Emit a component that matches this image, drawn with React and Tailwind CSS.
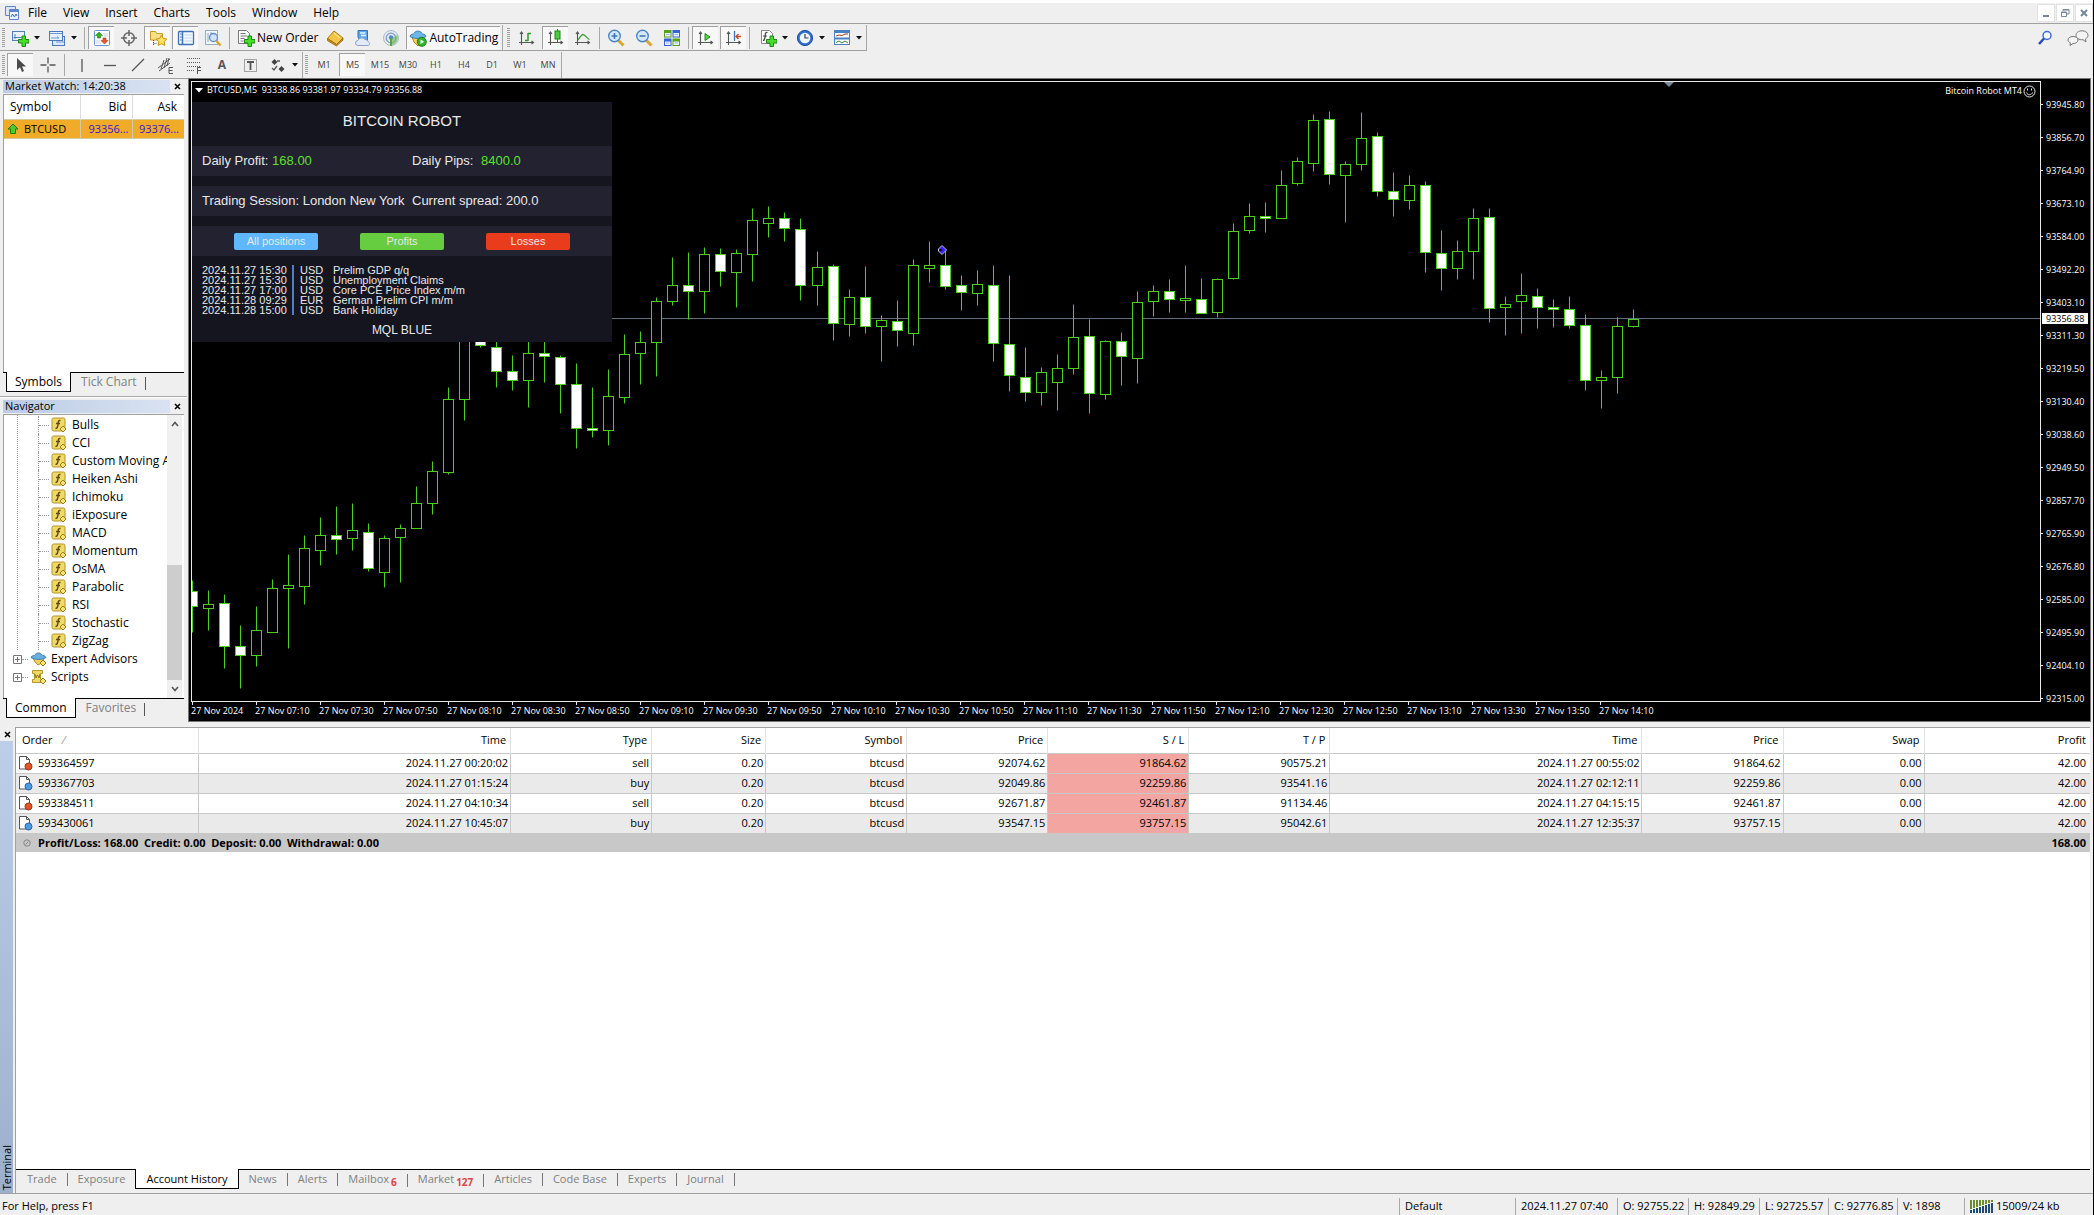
const GREEN = "#4ccf1c";

// [high, bodyTop, bodyBottom, low, bearish]
const CANDLES = [
  [580, 591, 606, 632, 1], [590, 604, 608, 630, 0], [594, 603, 646, 668, 1], [625, 646, 655, 688, 1],
  [606, 630, 655, 666, 0], [579, 588, 632, 632, 0], [554, 585, 588, 648, 0], [535, 548, 586, 604, 0],
  [517, 535, 550, 565, 0], [506, 535, 539, 554, 1], [503, 530, 538, 550, 0], [523, 532, 568, 571, 1],
  [535, 538, 572, 587, 0], [524, 528, 537, 582, 0], [486, 503, 528, 528, 0], [461, 471, 503, 514, 0],
  [387, 399, 472, 474, 0], [290, 300, 399, 420, 0], [320, 330, 345, 347, 1], [335, 347, 371, 387, 1],
  [355, 371, 380, 390, 1], [335, 353, 380, 407, 0], [335, 353, 356, 382, 1], [355, 357, 384, 413, 1],
  [363, 384, 428, 448, 1], [387, 428, 430, 437, 1], [369, 396, 430, 445, 0], [334, 354, 397, 403, 0],
  [331, 342, 353, 384, 0], [297, 301, 342, 376, 0], [257, 285, 301, 305, 0], [252, 285, 291, 319, 1],
  [247, 254, 291, 313, 0], [248, 254, 271, 286, 1], [249, 253, 272, 307, 0], [208, 220, 254, 281, 0],
  [206, 218, 223, 237, 0], [212, 218, 228, 241, 1], [218, 229, 285, 300, 1], [251, 267, 285, 305, 0],
  [264, 266, 323, 340, 1], [289, 297, 324, 336, 0], [266, 297, 326, 333, 1], [315, 320, 326, 361, 0],
  [300, 321, 330, 346, 1], [259, 265, 333, 345, 0], [241, 265, 268, 282, 0], [250, 265, 286, 289, 1],
  [275, 285, 292, 310, 1], [270, 284, 293, 305, 0], [265, 285, 343, 361, 1], [275, 344, 375, 391, 1],
  [347, 377, 392, 401, 1], [367, 372, 392, 405, 0], [354, 368, 382, 410, 0], [304, 337, 368, 374, 0],
  [319, 336, 393, 413, 1], [340, 341, 394, 399, 0], [332, 341, 356, 385, 1], [291, 302, 358, 383, 0],
  [285, 291, 301, 316, 0], [279, 291, 299, 312, 1], [265, 298, 300, 312, 0], [278, 299, 313, 313, 1],
  [278, 279, 312, 317, 0], [223, 231, 278, 279, 0], [203, 216, 230, 233, 0], [202, 216, 218, 232, 1],
  [170, 185, 218, 218, 0], [157, 161, 183, 185, 0], [114, 120, 163, 171, 0], [111, 119, 174, 184, 1],
  [161, 164, 175, 222, 0], [112, 138, 164, 170, 0], [132, 136, 191, 196, 1], [172, 191, 199, 216, 1],
  [175, 185, 200, 209, 0], [181, 185, 252, 272, 1], [230, 253, 268, 290, 1], [240, 251, 268, 279, 0],
  [208, 218, 251, 279, 0], [208, 217, 308, 322, 1], [296, 304, 307, 335, 0], [273, 295, 301, 333, 0],
  [288, 296, 307, 328, 1], [299, 307, 309, 327, 1], [296, 309, 325, 328, 1], [314, 325, 380, 390, 1],
  [370, 377, 380, 408, 0], [317, 326, 377, 393, 0], [309, 319, 326, 327, 0],
];

const PRICES = [
  "93945.80", "93856.70", "93764.90", "93673.10", "93584.00", "93492.20", "93403.10",
  "93311.30", "93219.50", "93130.40", "93038.60", "92949.50", "92857.70", "92765.90",
  "92676.80", "92585.00", "92495.90", "92404.10", "92315.00",
];

const TIMES = [
  "2024", "07:10", "07:30", "07:50", "08:10", "08:30", "08:50", "09:10", "09:30", "09:50",
  "10:10", "10:30", "10:50", "11:10", "11:30", "11:50", "12:10", "12:30", "12:50", "13:10",
  "13:30", "13:50", "14:10",
];

const INDICATORS = [
  "Bulls", "CCI", "Custom Moving Average", "Heiken Ashi", "Ichimoku", "iExposure", "MACD",
  "Momentum", "OsMA", "Parabolic", "RSI", "Stochastic", "ZigZag",
];

const NEWS = [
  ["2024.11.27 15:30", "USD", "Prelim GDP q/q"],
  ["2024.11.27 15:30", "USD", "Unemployment Claims"],
  ["2024.11.27 17:00", "USD", "Core PCE Price Index m/m"],
  ["2024.11.28 09:29", "EUR", "German Prelim CPI m/m"],
  ["2024.11.28 15:00", "USD", "Bank Holiday"],
];

const COLUMNS = ["Time", "Type", "Size", "Symbol", "Price", "S / L", "T / P", "Time", "Price", "Swap", "Profit"];

const ORDERS = [
  ["593364597", "2024.11.27 00:20:02", "sell", "0.20", "btcusd", "92074.62", "91864.62", "90575.21", "2024.11.27 00:55:02", "91864.62", "0.00", "42.00"],
  ["593367703", "2024.11.27 01:15:24", "buy", "0.20", "btcusd", "92049.86", "92259.86", "93541.16", "2024.11.27 02:12:11", "92259.86", "0.00", "42.00"],
  ["593384511", "2024.11.27 04:10:34", "sell", "0.20", "btcusd", "92671.87", "92461.87", "91134.46", "2024.11.27 04:15:15", "92461.87", "0.00", "42.00"],
  ["593430061", "2024.11.27 10:45:07", "buy", "0.20", "btcusd", "93547.15", "93757.15", "95042.61", "2024.11.27 12:35:37", "93757.15", "0.00", "42.00"],
];

const TERMINAL_TABS = [
  { label: "Trade" },
  { label: "Exposure" },
  { label: "Account History", active: true },
  { label: "News" },
  { label: "Alerts" },
  { label: "Mailbox", count: 6 },
  { label: "Market", count: 127 },
  { label: "Articles" },
  { label: "Code Base" },
  { label: "Experts" },
  { label: "Journal" },
];

function Svg({ children, size = 18 }) {
  return (
    <svg width={size} height={size} viewBox="0 0 18 18" fill="none" className="shrink-0" aria-hidden="true">
      {children}
    </svg>
  );
}

function Plus() {
  return <path d="M11 7h3.500v3.500H18V14h-3.500v3.500H11V14H7.500v-3.500H11z" fill="#4ade2a" stroke="#168a12" strokeWidth="1" />;
}

function Axes() {
  return <path d="M3.500 3v13M1 13.500h14M2 5l1.500-2L5 5M13.500 12l2 1.500-2 1.500" stroke="#555" strokeWidth="1.100" />;
}

function Caret() {
  return (
    <svg width="6" height="4" viewBox="0 0 6 4" className="shrink-0" aria-hidden="true">
      <path d="M0 0h6L3 3.500z" fill="#111" />
    </svg>
  );
}

const ICONS = {
  newChart: (
    <>
      <rect x="1.500" y="2.500" width="12" height="9" fill="#e8f1fb" stroke="#4f81bd" />
      <path d="M4 5v5M2.500 8.500h8" stroke="#4f81bd" />
      <Plus />
    </>
  ),
  profiles: (
    <>
      <rect x="4.500" y="7.500" width="12" height="9" fill="#dbe8f8" stroke="#4a78bd" />
      <rect x="1.500" y="2.500" width="13" height="9" fill="#e8f1fb" stroke="#4a78bd" />
      <path d="M2 4.500h12M3 9h8l-2-1.500M16 13H8" stroke="#6f9bd2" />
    </>
  ),
  marketWatch: (
    <>
      <rect x="1.500" y="1.500" width="15" height="15" rx="1" fill="#fff" stroke="#6b94cc" />
      <path d="M10 5h5M3 12h4M3 14h5M11 7h4" stroke="#c9d3e2" />
      <path d="M6 3l3.500 3.500h-2V9h-3V6.500h-2z" fill="#37b51e" stroke="#1a7d12" strokeWidth=".6" />
      <path d="M11.500 15L8 11.500h2V9h3v2.500h2z" fill="#f0562a" stroke="#b33210" strokeWidth=".6" />
    </>
  ),
  dataWindow: (
    <>
      <circle cx="9" cy="9" r="5.300" stroke="#666" strokeWidth="1.500" />
      <path d="M9 1v6M9 11v6M1 9h6M11 9h6" stroke="#666" strokeWidth="1.500" />
    </>
  ),
  navigator: (
    <>
      <path d="M1.500 11V2.500h5l1 2h6V11z" fill="#f8e08a" stroke="#c69b21" />
      <path d="M4.500 11v6M4.500 14.500h4" stroke="#555" strokeDasharray="1 1" />
      <path d="M12.500 6l1.700 3.400 3.600.6-2.600 2.600.6 3.800-3.300-1.700-3.300 1.700.6-3.800L7.200 10l3.600-.6z" fill="#ffe066" stroke="#c8941a" />
    </>
  ),
  terminal: (
    <>
      <rect x="1.500" y="2.500" width="15" height="13" rx="1" fill="#f4f8fd" stroke="#3f6fb5" strokeWidth="1.300" />
      <path d="M5.500 3v12" stroke="#3f6fb5" strokeWidth="1.500" />
      <path d="M7.500 6h8M7.500 9h8M7.500 12h8" stroke="#c3d5ec" />
      <path d="M3 5h1.500M3 8h1.500M3 11h1.500" stroke="#3f6fb5" />
    </>
  ),
  tester: (
    <>
      <rect x="1.500" y="1.500" width="12" height="14" fill="#f3f6fa" stroke="#9aa9bb" />
      <path d="M4 4v9M7 3v9M10 4v7" stroke="#8aa4c4" />
      <circle cx="9.500" cy="8.500" r="4" fill="#cfe4f8" fillOpacity=".8" stroke="#5b8fc7" strokeWidth="1.300" />
      <path d="M12.500 12l4 4.500" stroke="#d6a52a" strokeWidth="2.500" />
    </>
  ),
  newOrder: (
    <>
      <path d="M1.500 1.500h8l3 3v10h-11z" fill="#fff" stroke="#777" />
      <path d="M3.500 4.500h5M3.500 7h7M3.500 9.500h4M3.500 12h3" stroke="#777" />
      <Plus />
    </>
  ),
  metaEditor: (
    <>
      <path d="M1.500 9.500L8 2l9 7-6.500 6.500z" fill="#f4c544" stroke="#a97b12" />
      <path d="M1.500 9.500v2.200l9 5.300 6.500-6V9l-6.500 6.500z" fill="#c89222" stroke="#94690c" strokeWidth=".8" />
      <path d="M8 4l6 5" stroke="#fff3b8" />
    </>
  ),
  mql: (
    <>
      <path d="M4 1.500h9.500V11H5.500L4 8z" fill="#5da4ea" stroke="#2f73c4" />
      <path d="M6 4h5.500M7 6.500h5" stroke="#e6f2ff" strokeWidth="1.300" />
      <path d="M4 16.500a2.500 2.500 0 010-5 4 4 0 017-1 3.500 3.500 0 013.500 2.500 2 2 0 010 3.500z" fill="#e2eaf5" stroke="#8ba4c8" />
    </>
  ),
  signals: (
    <>
      <circle cx="9" cy="9" r="7.500" fill="#e4ecf2" stroke="#a9bccd" />
      <circle cx="9" cy="9" r="4.800" stroke="#7b9cc6" strokeWidth="1.300" />
      <path d="M9 9l6.500-3a7 7 0 01-.5 6 7 7 0 01-6 4z" fill="#79bd5c" fillOpacity=".7" />
      <circle cx="9" cy="8.500" r="2.200" fill="#4e8ac9" />
      <path d="M9 9v8" stroke="#58a545" strokeWidth="2" />
    </>
  ),
  autoTrading: (
    <>
      <path d="M3 8h12l-2 5-4 4-4-4z" fill="#f6cf4e" stroke="#bb8b19" />
      <path d="M1 7.500C1 5 5 5.500 5.500 4 6 1.500 12 1.500 12.500 4c.5 1.500 4.500 1 4.500 3.500-3 2.500-13 2.500-16 0z" fill="#6cb6e8" stroke="#3a7fb5" />
      <circle cx="12.800" cy="12.800" r="4.500" fill="#35b32c" stroke="#16801a" />
      <path d="M11.500 10.500v4.600l3.700-2.300z" fill="#fff" />
    </>
  ),
  bars: (
    <>
      <Axes />
      <path d="M10 4v8M10 4.500h3M7 11.500h3" stroke="#2f9a2a" strokeWidth="1.500" />
    </>
  ),
  candles: (
    <>
      <Axes />
      <path d="M10.500 0v13" stroke="#1d8618" />
      <rect x="8" y="2" width="5" height="8" fill="#4fca42" stroke="#1d8618" />
    </>
  ),
  line: (
    <>
      <Axes />
      <path d="M3.500 11C6 9 7 5.500 9 5.500s4 4 6.500 5" stroke="#3b9a36" strokeWidth="1.300" />
    </>
  ),
  zoomIn: (
    <>
      <path d="M11 11l5.500 5.500" stroke="#d5a92c" strokeWidth="3" />
      <circle cx="7.500" cy="7" r="5.800" fill="#d4e9fb" stroke="#4a86c5" strokeWidth="1.400" />
      <path d="M7.500 4v6M4.500 7h6" stroke="#3d79ba" strokeWidth="1.600" />
    </>
  ),
  zoomOut: (
    <>
      <path d="M11 11l5.500 5.500" stroke="#d5a92c" strokeWidth="3" />
      <circle cx="7.500" cy="7" r="5.800" fill="#d4e9fb" stroke="#4a86c5" strokeWidth="1.400" />
      <path d="M4.500 7h6" stroke="#3d79ba" strokeWidth="1.600" />
    </>
  ),
  tile: (
    <>
      <path d="M1 1h7.500v7.500H1zM9.500 9.500H17V17H9.500z" fill="#58a21a" />
      <path d="M9.500 1H17v7.500H9.500zM1 9.500h7.500V17H1z" fill="#3564d4" />
      <path d="M2 4h5.500v3.500H2zM10.500 4H16v3.500h-5.500zM2 12.500h5.500V16H2zM10.500 12.500H16V16h-5.500z" fill="#eef4ff" />
      <path d="M3 5.500h3.500M11.500 5.500H15M3 14h3.500M11.500 14H15" stroke="#9db8dd" />
    </>
  ),
  autoScroll: (
    <>
      <Axes />
      <path d="M8 4.500v7l5-3.500z" fill="#5ccf4c" stroke="#218a1c" />
    </>
  ),
  shift: (
    <>
      <Axes />
      <path d="M9.500 2v10" stroke="#3d78b8" strokeWidth="1.300" />
      <path d="M16 7.500h-5M13.500 5L11 7.500l2.500 2.500" stroke="#cc4a1c" strokeWidth="1.400" />
    </>
  ),
  indicators: (
    <>
      <path d="M2.500 1.500h8l3 3v10h-11z" fill="#fff" stroke="#888" />
      <path d="M8.500 3.500c-3-.5-2 3-2.500 5s-.5 3-2 3M4 7h4" stroke="#444" strokeWidth="1.200" />
      <Plus />
    </>
  ),
  periods: (
    <>
      <circle cx="9" cy="9" r="7.600" fill="#2f6fd0" stroke="#1c4c9c" />
      <circle cx="9" cy="9" r="5.300" fill="#eef5ff" />
      <path d="M9 5v4h3.500" stroke="#345" strokeWidth="1.200" />
    </>
  ),
  templates: (
    <>
      <rect x="1.500" y="1.500" width="15" height="14" fill="#fff" stroke="#4a80c4" />
      <path d="M1.500 3h15M1.500 9.500h15" stroke="#4a80c4" strokeWidth="2" />
      <path d="M3 7l3-1 3 .5 3-1.500 3 0" stroke="#9c3a22" />
      <path d="M3 13.500l3-1.500 3 2 3-2 3 2" stroke="#358b2e" />
    </>
  ),
  cursor: <path d="M5 2v12l3-2.800 2 4.800 2-1-2-4.500h4z" fill="#4a4a4a" />,
  cross: <path d="M9 1.500v6M9 10.500v6M1.500 9h6M10.500 9h6" stroke="#555" strokeWidth="1.300" />,
  vline: <path d="M9 3v13" stroke="#555" strokeWidth="1.300" />,
  hline: <path d="M3 9.500h12" stroke="#555" strokeWidth="1.300" />,
  trend: <path d="M3 15L15 3" stroke="#555" strokeWidth="1.300" />,
  channel: (
    <>
      <path d="M1 12L13 3M2 15l11-8M4 13l3-9M7 12l3-10M10 10l2-8" stroke="#555" />
      <path d="M16 11.500h-4v6h4M12 14.500h3.500" stroke="#555" />
    </>
  ),
  fibo: (
    <>
      <path d="M2 2.500h14M2 6.500h14M2 10.500h14M2 14.500h8" stroke="#555" strokeDasharray="1 1" />
      <path d="M16 11.500h-3.500V18M12.500 14.500H16" stroke="#555" />
    </>
  ),
  label: (
    <>
      <rect x="3.500" y="3.500" width="12" height="12" stroke="#555" strokeDasharray="1 1" />
      <path d="M6 6h7M9.500 6v8" stroke="#555" strokeWidth="1.800" />
    </>
  ),
  arrows: (
    <>
      <path d="M5.500 3l3 3-3 3-3-3z M12.500 10l3 3-3 3-3-3z" fill="#444" />
      <path d="M8 5h3M3 12l2 2 3-4" stroke="#555" strokeWidth="1.300" />
    </>
  ),
};

function Separator() {
  return <span className="mx-[3px] h-[22px] w-px shrink-0 bg-[#a8a8a8]" />;
}

function Grip() {
  return (
    <span className="mx-[2px] h-[20px] w-[3px] shrink-0 bg-[repeating-linear-gradient(to_bottom,#a0a0a0_0px,#a0a0a0_1px,transparent_1px,transparent_2px)]" />
  );
}

function Tool({ icon, title, pressed, caret, children }) {
  const frame = pressed ? "border-l border-t border-[#a0a0a0] bg-[#f8f8f8]" : "";
  const size = caret ? "w-[37px] gap-[5px]" : children ? "gap-[2px] px-[2px]" : "w-[26px]";
  return (
    <button
      title={title}
      aria-label={title}
      className={`flex h-[23px] shrink-0 items-center justify-center ${size} ${frame}`}
    >
      {icon && <Svg>{ICONS[icon]}</Svg>}
      {children}
      {caret && <Caret />}
    </button>
  );
}

function WindowButton({ label, children }) {
  return (
    <button aria-label={label} className="flex h-[18px] w-[18px] items-center justify-center border border-[#e2e2e2] bg-white">
      <svg width="10" height="10" viewBox="0 0 10 10" fill="none" stroke="#76859a" aria-hidden="true">
        {children}
      </svg>
    </button>
  );
}

function MenuBar() {
  return (
    <header className="flex h-[23px] items-center border-t-3 border-white bg-[#efefef] pl-[4px] text-[12px] leading-[16px]">
      <svg width="16" height="16" viewBox="0 0 16 16" fill="none" aria-hidden="true">
        <path d="M1.500 1.500h10v9h-10z" fill="#dbe8fb" stroke="#5c86cc" />
        <path d="M5.500 4.500h9v10h-9z" fill="#eef5ff" stroke="#5c86cc" />
        <path d="M5.500 6h9" stroke="#5c86cc" strokeWidth="2" />
        <path d="M7 12l1.500-3 2 3 1.500-3 1 2" stroke="#3d6dbd" />
      </svg>
      <nav className="flex flex-1">
        {["File", "View", "Insert", "Charts", "Tools", "Window", "Help"].map((m) => (
          <button key={m} className="px-[8px]">{m}</button>
        ))}
      </nav>
      <div className="flex gap-px">
        <WindowButton label="Minimize">
          <path d="M2 8h6" strokeWidth="2" />
        </WindowButton>
        <WindowButton label="Restore">
          <path d="M3 3V1.500h6V6H7M1.500 4h5v4.500h-5zM3 2h6M1 4.500h6" />
        </WindowButton>
        <WindowButton label="Close">
          <path d="M2 2l6 6M8 2L2 8" strokeWidth="2" />
        </WindowButton>
      </div>
    </header>
  );
}

function Toolbars() {
  return (
    <div className="border-t border-[#a0a0a0] bg-[#efefef]">
      <div className="flex justify-between">
        <div className="flex h-[27px] items-center border-b border-[#a0a0a0] pt-px text-[12px]">
          <Grip />
          <Tool icon="newChart" title="New Chart" caret />
          <Tool icon="profiles" title="Profiles" caret />
          <Separator />
          <div className="flex gap-[2px]">
            <Tool icon="marketWatch" title="Market Watch" pressed />
            <Tool icon="dataWindow" title="Data Window" />
            <Tool icon="navigator" title="Navigator" pressed />
            <Tool icon="terminal" title="Terminal" pressed />
            <Tool icon="tester" title="Strategy Tester" />
          </div>
          <Separator />
          <div className="mx-[2px] flex gap-[2px]">
            <Tool icon="newOrder">New Order</Tool>
            <Tool icon="metaEditor" title="MetaEditor" />
            <Tool icon="mql" title="MQL5 Services" />
            <Tool icon="signals" title="Signals" />
            <Tool icon="autoTrading" pressed>AutoTrading</Tool>
          </div>
          <span className="mr-[2px] h-[25px] w-px bg-[#a8a8a8]" />
          <Grip />
          <div className="ml-[2px] flex gap-[2px]">
            <Tool icon="bars" title="Bar Chart" />
            <Tool icon="candles" title="Candlesticks" pressed />
            <Tool icon="line" title="Line Chart" />
          </div>
          <Separator />
          <div className="flex gap-[2px]">
            <Tool icon="zoomIn" title="Zoom In" />
            <Tool icon="zoomOut" title="Zoom Out" />
            <Tool icon="tile" title="Tile Windows" />
          </div>
          <Separator />
          <div className="flex gap-[2px]">
            <Tool icon="autoScroll" title="Auto Scroll" pressed />
            <Tool icon="shift" title="Chart Shift" pressed />
          </div>
          <Separator />
          <div className="ml-[2px] flex">
            <Tool icon="indicators" title="Indicators" caret />
            <Tool icon="periods" title="Periods" caret />
            <Tool icon="templates" title="Templates" caret />
          </div>
          <span className="h-[25px] w-px bg-[#a8a8a8]" />
        </div>
        <div className="flex items-center gap-[14px] pr-[4px]">
          <button aria-label="Search">
            <svg width="16" height="16" viewBox="0 0 16 16" fill="none">
              <circle cx="10" cy="5.500" r="4" fill="#f3f8ff" stroke="#3f6ae0" strokeWidth="1.500" />
              <path d="M7 8.500L2 14" stroke="#2449b8" strokeWidth="2.500" />
            </svg>
          </button>
          <button aria-label="Chat">
            <svg width="22" height="16" viewBox="0 0 22 16" fill="none" stroke="#777">
              <path d="M15 .8c3.500 0 6 2 6 4.500 0 1.500-1 2.800-2.500 3.600l.5 3-3-2.200c-4 .3-7-1.500-7-4.400 0-2.500 2.500-4.500 6-4.500z" fill="#f4f4f4" />
              <path d="M6 6.500c3 0 5 1.500 5 3.500s-2 3.500-5 3.500l-3 2 .4-2.700C1.800 12.200 1 11.200 1 10c0-2 2-3.500 5-3.500z" fill="#f4f4f4" />
            </svg>
          </button>
        </div>
      </div>
      <div className="flex h-[27px] items-center">
        <Grip />
        <div className="flex gap-[2px]">
          <Tool icon="cursor" title="Cursor" pressed />
          <Tool icon="cross" title="Crosshair" />
        </div>
        <Separator />
        <div className="ml-px flex gap-[2px]">
          <Tool icon="vline" title="Vertical Line" />
          <Tool icon="hline" title="Horizontal Line" />
          <Tool icon="trend" title="Trendline" />
          <Tool icon="channel" title="Equidistant Channel" />
          <Tool icon="fibo" title="Fibonacci Retracement" />
          <Tool title="Text">
            <span className="w-[22px] text-center text-[12px] font-bold text-[#555]">A</span>
          </Tool>
          <Tool icon="label" title="Text Label" />
          <Tool icon="arrows" title="Arrows" caret />
        </div>
        <span className="h-[26px] w-px bg-[#a8a8a8]" />
        <Grip />
        <div className="flex gap-[2px] pl-px text-[9px] text-[#444]">
          {["M1", "M5", "M15", "M30", "H1", "H4", "D1", "W1", "MN"].map((tf) => (
            <button
              key={tf}
              className={`h-[23px] w-[26px] ${tf === "M5" ? "border-l border-t border-[#a0a0a0] bg-[#f8f8f8]" : ""}`}
            >
              {tf}
            </button>
          ))}
        </div>
        <span className="h-[26px] w-px bg-[#a8a8a8]" />
      </div>
    </div>
  );
}

function CloseButton() {
  return (
    <button aria-label="Close" className="flex h-[14px] w-[14px] items-center justify-center">
      <svg width="7" height="7" viewBox="0 0 7 7"><path d="M1 1l5 5M6 1L1 6" stroke="#000" strokeWidth="1.600" /></svg>
    </button>
  );
}

function PanelTitle({ children }) {
  return (
    <div className="flex h-[15px] items-center justify-between">
      <h2 className="h-[13px] w-[167px] bg-linear-to-r from-[#bccce4] to-[#d8e2f2] pl-[2px] text-[11px] leading-[12px]">
        {children}
      </h2>
      <CloseButton />
    </div>
  );
}

function PanelTabs({ active, other }) {
  return (
    <div className="flex h-[24px] items-start border-t border-black pl-[3px] text-[12px] leading-[18px]">
      <button className="-mt-px h-[20px] border-x border-b border-black bg-white px-[8px]">{active}</button>
      <button className="pl-[10px] text-[#808080]">{other}</button>
      <span className="ml-[8px] mt-[4px] h-[13px] w-px bg-[#555]" />
    </div>
  );
}

function MarketWatch() {
  return (
    <section className="flex flex-1 flex-col border-b border-[#a8a8a8] pl-[3px] pr-[3px]">
      <PanelTitle>Market Watch: 14:20:38</PanelTitle>
      <div className="flex-1 border-l border-t border-[#a0a0a0] bg-white">
        <table className="w-full table-fixed border-collapse text-[12px] leading-[16px]">
          <thead>
            <tr className="h-[24px]">
              <th className="w-[76px] border-r border-[#ddd] pl-[6px] text-left font-normal">Symbol</th>
              <th className="border-r border-[#ddd] pr-[5px] text-right font-normal">Bid</th>
              <th className="pr-[7px] text-right font-normal">Ask</th>
            </tr>
          </thead>
          <tbody>
            <tr className="h-[19px] border-y border-[#d8c9a0] bg-[#f0ab28] text-[11px]">
              <td className="border-r border-[#d8c9a0]">
                <span className="flex items-center gap-[5px] pl-[3px]">
                  <svg width="12" height="12" viewBox="0 0 12 12" aria-hidden="true">
                    <path d="M6 1l5 5H8.500v4.500h-5V6H1z" fill="#4fc92f" stroke="#1e7a12" />
                  </svg>
                  BTCUSD
                </span>
              </td>
              <td className="border-r border-[#d8c9a0] pr-[3px] text-right text-[#3a16d8]">93356...</td>
              <td className="pr-[5px] text-right text-[#3a16d8]">93376...</td>
            </tr>
          </tbody>
        </table>
      </div>
      <PanelTabs active="Symbols" other="Tick Chart" />
    </section>
  );
}

function IndicatorIcon() {
  return (
    <svg width="16" height="16" viewBox="0 0 16 16" fill="none" className="shrink-0" aria-hidden="true">
      <rect x="1" y="1" width="13" height="13" rx="1.500" fill="#f0d964" stroke="#b3952a" />
      <path d="M9.500 3.500C6.500 3 7.500 6 7 8s-.5 3.500-2.500 3.500M5 6.500h4" stroke="#5d4c10" strokeWidth="1.400" />
      <path d="M12 9l3 3-3 3-3-3z" fill="#f7e27a" stroke="#9c7f1a" />
    </svg>
  );
}

function TreeRoot({ label, children }) {
  return (
    <li className="flex h-[18px] items-center pl-[9px]">
      <svg width="9" height="9" viewBox="0 0 9 9" className="shrink-0 bg-white" aria-hidden="true">
        <path d="M.5.500h8v8h-8zM2 4.500h5M4.500 2v5" fill="none" stroke="#777" />
      </svg>
      <span className="mr-[2px] w-[6px] border-t border-dotted border-[#999]" />
      {children}
      <span className="pl-[4px]">{label}</span>
    </li>
  );
}

function Navigator() {
  return (
    <section className="border-t border-white pl-[3px] pr-[3px] pt-px">
      <PanelTitle>Navigator</PanelTitle>
      <div className="flex h-[284px] border-l border-t border-[#a0a0a0] bg-white">
        <div className="min-w-0 flex-1 overflow-hidden text-[12px] leading-[18px]">
          <ul className="ml-[13px] border-l border-dotted border-[#999] pt-px">
            {INDICATORS.map((name) => (
              <li key={name} className="ml-[20px] flex h-[18px] items-center border-l border-dotted border-[#999] whitespace-nowrap">
                <span className="mr-[2px] w-[10px] shrink-0 border-t border-dotted border-[#999]" />
                <IndicatorIcon />
                <span className="pl-[5px]">{name}</span>
              </li>
            ))}
          </ul>
          <ul>
            <TreeRoot label="Expert Advisors">
              <svg width="17" height="16" viewBox="0 0 17 16" fill="none" aria-hidden="true">
                <path d="M3 7h11l-2 5-4 2-3-3z" fill="#edcf5a" stroke="#b3952a" />
                <path d="M1 6.500C1 4.500 5 5 5.500 3.500c.5-2 5.500-2 6 0 .5 1.500 4.500 1 4.500 3-3 2.500-12 2.500-15 0z" fill="#6aaee0" stroke="#3d7fb3" />
                <path d="M13 9l3 3-3 3-3-3z" fill="#f7e27a" stroke="#9c7f1a" />
              </svg>
            </TreeRoot>
            <TreeRoot label="Scripts">
              <svg width="17" height="16" viewBox="0 0 17 16" fill="none" aria-hidden="true">
                <path d="M2.500 1.500h10v3h-2v6h2v3h-10v-3h2v-6h-2z" fill="#f0d964" stroke="#b3952a" />
                <path d="M5 5l1 4 1.500-3L9 9l1-4" stroke="#8d7420" />
                <path d="M13 9l3 3-3 3-3-3z" fill="#f7e27a" stroke="#9c7f1a" />
              </svg>
            </TreeRoot>
          </ul>
        </div>
        <div className="flex w-[15px] flex-col items-center justify-between bg-[#f0f0f0] py-[6px]">
          <svg width="8" height="6" viewBox="0 0 8 6" fill="none"><path d="M1 5l3-3.500L7 5" stroke="#555" strokeWidth="1.600" /></svg>
          <div className="mt-[138px] mb-[6px] w-full flex-1 bg-[#cdcdcd]" />
          <svg width="8" height="6" viewBox="0 0 8 6" fill="none"><path d="M1 1l3 3.500L7 1" stroke="#555" strokeWidth="1.600" /></svg>
        </div>
        <div className="w-[2px] bg-white" />
      </div>
      <PanelTabs active="Common" other="Favorites" />
    </section>
  );
}

function Candles() {
  return (
    <svg className="absolute inset-0 h-full w-full" aria-label="BTCUSD M5 candles">
      <line x1="0" x2="100%" y1="236.500" y2="236.500" stroke="#5f6f80" />
      <g transform="translate(0 -81.500)">
        {CANDLES.map(([high, top, bottom, low, bearish], i) => {
          const x = Math.round(i * 16.013) + 0.5;
          return (
            <g key={i} stroke={GREEN}>
              <path d={`M${x} ${high}V${top}M${x} ${bottom}V${low}`} />
              <rect x={x - 5} y={top} width="10" height={bottom - top} fill={bearish ? "#fff" : "#000"} />
            </g>
          );
        })}
        <path d="M750 245l4.500 4.500-4.500 4.500-3.500-3.500v-2z" fill="#3a1cf5" stroke="#c4c6e8" />
        <circle cx="748.500" cy="249.500" r="1.200" fill="#000" />
      </g>
      <path d="M1472 0h10l-5 5z" fill="#7d8a9c" />
    </svg>
  );
}

function RobotPanel() {
  return (
    <div className="absolute left-0 top-[20px] w-[420px] bg-[#151520] font-['Liberation_Sans',sans-serif] text-[13px] text-[#e8e8e8]">
      <h1 className="h-[44px] pt-[9px] text-center text-[15px] leading-[20px]">BITCOIN ROBOT</h1>
      <div className="mb-[10px] grid h-[30px] grid-cols-2 items-center bg-[#222230] px-[10px]">
        <p>Daily Profit: <span className="text-[#5fe02c]">168.00</span></p>
        <p className="pl-[10px]">Daily Pips: <span className="pl-[4px] text-[#5fe02c]">8400.0</span></p>
      </div>
      <div className="mb-[10px] grid h-[30px] grid-cols-2 items-center bg-[#222230] px-[10px] whitespace-nowrap">
        <p>Trading Session: London New York</p>
        <p className="pl-[10px]">Current spread: 200.0</p>
      </div>
      <div className="flex h-[30px] items-center gap-[42px] bg-[#222230] px-[42px] text-[11px]">
        <button className="h-[17px] w-[84px] rounded-[2px] bg-[#5fb8ff]">All positions</button>
        <button className="h-[17px] w-[84px] rounded-[2px] bg-[#66cc40]">Profits</button>
        <button className="h-[17px] w-[84px] rounded-[2px] bg-[#e83c1c]">Losses</button>
      </div>
      <ul className="pl-[10px] pt-[9px] text-[11px] leading-[10px]">
        {NEWS.map(([time, currency, title]) => (
          <li key={title} className="flex">
            <span className="w-[90px]">{time}</span>
            <span className="w-[41px] border-l-2 border-[#4f7fc8] pl-[6px]">{currency}</span>
            <span>{title}</span>
          </li>
        ))}
      </ul>
      <p className="h-[27px] pt-[6px] text-center text-[12px] leading-[18px]">MQL BLUE</p>
    </div>
  );
}

function Chart() {
  return (
    <main className="flex min-w-0 flex-1 border border-[#777] bg-black pl-[2px] pt-[2px] text-[9px] text-white">
      <div className="flex min-w-0 flex-1 flex-col">
        <div className="relative flex-1 border border-[#e8e8e8]">
          <Candles />
          <div className="relative flex items-start justify-between pl-[3px] pr-[4px] leading-[16px]">
            <p className="flex items-center gap-[4px]">
              <svg width="8" height="5" viewBox="0 0 8 5" aria-hidden="true"><path d="M0 0h8L4 4.500z" fill="#fff" /></svg>
              <span>BTCUSD,M5&nbsp; 93338.86 93381.97 93334.79 93356.88</span>
            </p>
            <p className="flex items-center gap-px pt-[1px]">
              Bitcoin Robot MT4
              <svg width="13" height="13" viewBox="0 0 13 13" fill="none" stroke="#e8e8e8" aria-hidden="true">
                <circle cx="6.500" cy="6.500" r="5.500" />
                <path d="M3.500 7.500c1 3 5 3 6 0M4.500 3.500v2M8.500 3.500v2" />
              </svg>
            </p>
          </div>
          <RobotPanel />
        </div>
        <div className="flex h-[19px]">
          {TIMES.map((t) => (
            <span key={t} className="relative w-[64px] shrink-0 pt-[2px] leading-[14px] whitespace-nowrap">
              <i className="absolute left-[1px] top-0 h-[3px] w-px bg-[#e8e8e8]" />
              27 Nov {t}
            </span>
          ))}
        </div>
      </div>
      <div className="relative w-[49px] pt-[7px] pb-[6px]">
        {PRICES.map((p) => (
          <div key={p} className="flex h-[33px] items-center gap-[3px]">
            <span className="h-px w-[2px] bg-[#e8e8e8]" />
            {p}
          </div>
        ))}
        <span className="absolute left-px top-[232px] h-[11px] w-[46px] bg-white pl-[4px] leading-[11px] text-black">93356.88</span>
      </div>
    </main>
  );
}

function OrderIcon({ side }) {
  return (
    <svg width="15" height="16" viewBox="0 0 15 16" fill="none" className="shrink-0" aria-hidden="true">
      <path d="M1.500 1.500h7l3 3v9.500h-10z" fill="#fff" stroke="#555" />
      <path d="M8.500 1.500v3h3" stroke="#555" />
      <circle cx="10.500" cy="11.500" r="3.500" fill={side === "sell" ? "#e0562a" : "#4a9be6"} stroke={side === "sell" ? "#9c3210" : "#2565ad"} />
    </svg>
  );
}

function History() {
  return (
    <table className="w-full table-fixed border-collapse text-right text-[11px] leading-[14px]">
      <colgroup>
        <col className="w-[8.800%]" />
        <col className="w-[15.050%]" />
        <col className="w-[6.800%]" />
        <col className="w-[5.500%]" />
        <col className="w-[6.800%]" />
        <col className="w-[6.800%]" />
        <col className="w-[6.800%]" />
        <col className="w-[6.800%]" />
        <col className="w-[15.050%]" />
        <col className="w-[6.800%]" />
        <col className="w-[6.800%]" />
        <col />
      </colgroup>
      <thead>
        <tr className="h-[25px] border-b border-[#c8c8c8]">
          <th className="border-r border-[#e2e2e2] pl-[6px] text-left font-normal">
            Order <span className="pl-[8px] text-[#888]">⁄</span>
          </th>
          {COLUMNS.map((c, i) => (
            <th key={i} className="border-r border-[#e2e2e2] pr-[4px] font-normal last:border-r-0">{c}</th>
          ))}
        </tr>
      </thead>
      <tbody>
        {ORDERS.map(([id, ...cells]) => (
          <tr key={id} className="h-[20px] border-b border-[#c8c8c8] even:bg-[#eaeaea]">
            <td className="border-r border-[#c8c8c8]">
              <span className="flex items-center gap-[5px] pl-[2px]">
                <OrderIcon side={cells[1]} />
                {id}
              </span>
            </td>
            {cells.map((c, i) => (
              <td
                key={i}
                className={`border-r border-[#c8c8c8] pr-[2px] last:border-r-0 last:pr-[4px] ${i === 5 ? "bg-[#f2a5a1]" : ""}`}
              >
                {c}
              </td>
            ))}
          </tr>
        ))}
        <tr className="h-[19px] bg-[#c8c8c8] font-bold">
          <td colSpan={11} className="text-left">
            <span className="flex items-center gap-[7px] pl-[7px] whitespace-pre">
              <svg width="8" height="8" viewBox="0 0 8 8" fill="none" stroke="#888" aria-hidden="true">
                <circle cx="4" cy="4" r="3.200" />
                <path d="M2.500 5.500l3-3" />
              </svg>
              {"Profit/Loss: 168.00  Credit: 0.00  Deposit: 0.00  Withdrawal: 0.00"}
            </span>
          </td>
          <td className="pr-[4px]">168.00</td>
        </tr>
      </tbody>
    </table>
  );
}

function Terminal() {
  return (
    <section className="flex flex-1 pt-[5px]">
      <div className="flex w-[15px] flex-col">
        <CloseButton />
        <div className="flex w-[13px] flex-1 items-end justify-center bg-linear-to-b from-[#bdcfe8] to-[#9cb0cd] pb-[3px]">
          <h2 className="text-[11px] leading-[13px] [writing-mode:vertical-rl] rotate-180">Terminal</h2>
        </div>
      </div>
      <div className="mr-[3px] flex min-w-0 flex-1 flex-col border-l border-t border-[#a0a0a0]">
        <div className="flex-1 bg-white">
          <History />
        </div>
        <div className="flex h-[24px] items-start border-t border-black pl-px text-[11px] leading-[18px] text-[#808080]">
          {TERMINAL_TABS.map((t) =>
            t.active ? (
              <button key={t.label} className="-mt-px h-[20px] border-x border-b border-black bg-white px-[10px] text-black">
                {t.label}
              </button>
            ) : (
              <div key={t.label} className="flex items-center">
                <button className="flex pl-[10px] pr-[10px]">
                  {t.label}
                  {t.count && <span className="pl-[2px] pt-[4px] text-[10px] font-bold leading-[16px] text-[#dd4444]">{t.count}</span>}
                </button>
                {t.label !== "Exposure" && <span className="h-[13px] w-px bg-[#777]" />}
              </div>
            )
          )}
        </div>
      </div>
    </section>
  );
}

function StatusBar() {
  const cell = "flex shrink-0 items-center border-l border-[#a8a8a8] pl-[5px]";
  return (
    <footer className="flex h-[22px] items-stretch border-t border-[#a0a0a0] pt-[4px] text-[11px]">
      <p className="flex flex-1 items-center pl-[2px]">For Help, press F1</p>
      <span className={`${cell} w-[116px]`}>Default</span>
      <span className={`${cell} w-[102px]`}>2024.11.27 07:40</span>
      <span className={`${cell} w-[71px]`}>O: 92755.22</span>
      <span className={`${cell} w-[71px]`}>H: 92849.29</span>
      <span className={`${cell} w-[69px]`}>L: 92725.57</span>
      <span className={`${cell} w-[69px]`}>C: 92776.85</span>
      <span className={`${cell} w-[67px]`}>V: 1898</span>
      <span className={`${cell} w-[129px] gap-[3px]`}>
        <svg width="23" height="13" viewBox="0 0 23 13" aria-hidden="true">
          {Array.from({ length: 8 }, (_, i) => (
            <g key={i}>
              <rect x={i * 3} y="0" width="2" height={9 - i} fill="#6d8c2c" />
              <rect x={i * 3} y={10 - i} width="2" height={3 + i} fill="#1f4a73" />
            </g>
          ))}
        </svg>
        15009/24 kb
      </span>
    </footer>
  );
}

export default function App() {
  return (
    <div className="flex min-h-screen flex-col border-r border-black bg-[#efefef] font-['Open_Sans','Noto_Sans',sans-serif] text-black">
      <MenuBar />
      <Toolbars />
      <div className="flex pr-[2px]">
        <aside className="flex w-[188px] shrink-0 flex-col border-t border-[#a0a0a0] pr-[1px]">
          <MarketWatch />
          <Navigator />
        </aside>
        <Chart />
      </div>
      <Terminal />
      <StatusBar />
    </div>
  );
}
